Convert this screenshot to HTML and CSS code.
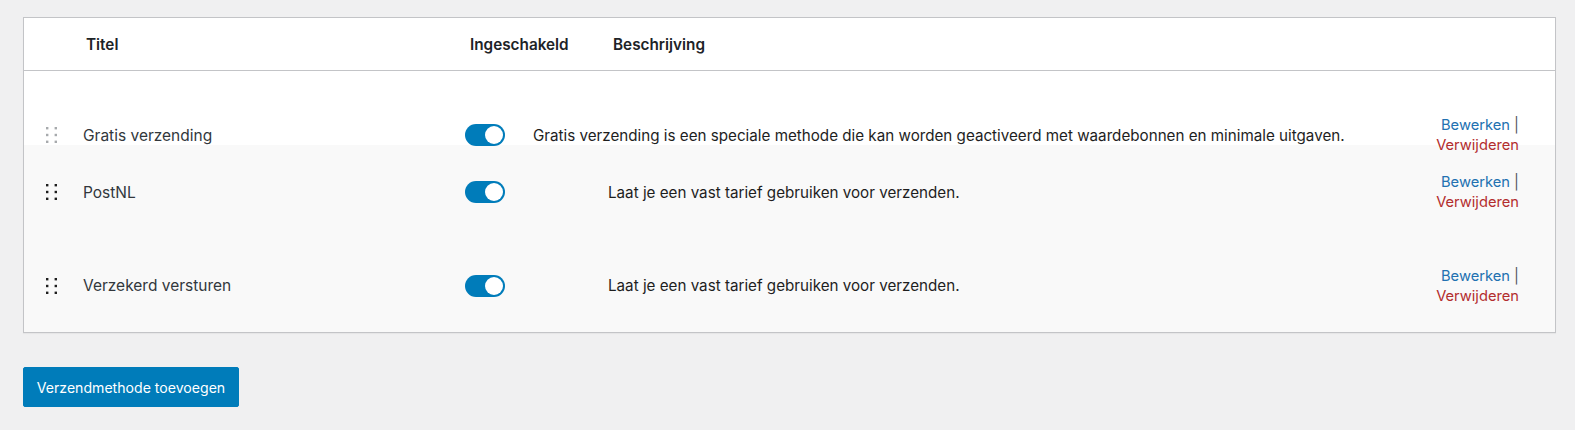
FILE: index.html
```html
<!DOCTYPE html>
<html lang="nl">
<head>
<meta charset="utf-8">
<title>Verzendmethoden</title>
<link rel="stylesheet" href="styles.css">
</head>
<body>
<div class="methods">
  <div class="head">
    <div class="h-title">Titel</div>
    <div class="h-enabled">Ingeschakeld</div>
    <div class="h-desc">Beschrijving</div>
  </div>
  <div class="row row-drag">
    <div class="c-handle"><svg class="handle handle-light" width="11" height="16" viewBox="0 0 11 16"><rect x="0" y="0" width="2.4" height="2.4"/><rect x="8.6" y="0" width="2.4" height="2.4"/><rect x="0" y="6.8" width="2.4" height="2.4"/><rect x="8.6" y="6.8" width="2.4" height="2.4"/><rect x="0" y="13.6" width="2.4" height="2.4"/><rect x="8.6" y="13.6" width="2.4" height="2.4"/></svg></div>
    <div class="c-title">Gratis verzending</div>
    <div class="c-toggle c-toggle-narrow"><span class="toggle"><span class="knob"></span></span></div>
    <div class="c-desc">Gratis verzending is een speciale methode die kan worden geactiveerd met waardebonnen en minimale uitgaven.</div>
    <div class="c-actions"><a class="edit" href="#">Bewerken</a> <span class="sep">|</span><br><a class="del" href="#">Verwijderen</a></div>
  </div>
  <div class="row row-alt row-2">
    <div class="c-handle"><svg class="handle" width="11" height="16" viewBox="0 0 11 16"><rect x="0" y="0" width="2.4" height="2.4"/><rect x="8.6" y="0" width="2.4" height="2.4"/><rect x="0" y="6.8" width="2.4" height="2.4"/><rect x="8.6" y="6.8" width="2.4" height="2.4"/><rect x="0" y="13.6" width="2.4" height="2.4"/><rect x="8.6" y="13.6" width="2.4" height="2.4"/></svg></div>
    <div class="c-title">PostNL</div>
    <div class="c-toggle"><span class="toggle"><span class="knob"></span></span></div>
    <div class="c-desc">Laat je een vast tarief gebruiken voor verzenden.</div>
    <div class="c-actions"><a class="edit" href="#">Bewerken</a> <span class="sep">|</span><br><a class="del" href="#">Verwijderen</a></div>
  </div>
  <div class="row row-alt row-3">
    <div class="c-handle"><svg class="handle" width="11" height="16" viewBox="0 0 11 16"><rect x="0" y="0" width="2.4" height="2.4"/><rect x="8.6" y="0" width="2.4" height="2.4"/><rect x="0" y="6.8" width="2.4" height="2.4"/><rect x="8.6" y="6.8" width="2.4" height="2.4"/><rect x="0" y="13.6" width="2.4" height="2.4"/><rect x="8.6" y="13.6" width="2.4" height="2.4"/></svg></div>
    <div class="c-title">Verzekerd versturen</div>
    <div class="c-toggle"><span class="toggle"><span class="knob"></span></span></div>
    <div class="c-desc">Laat je een vast tarief gebruiken voor verzenden.</div>
    <div class="c-actions"><a class="edit" href="#">Bewerken</a> <span class="sep">|</span><br><a class="del" href="#">Verwijderen</a></div>
  </div>
</div>
<button class="add-btn" type="button">Verzendmethode toevoegen</button>
</body>
</html>
```

FILE: styles.css
```css
html, body {
  margin: 0;
  padding: 0;
  background: #f0f0f1;
}
body {
  padding: 17px 19px 0 23px;
  font-family: "Inter", "Liberation Sans", sans-serif;
  color: #1d2327;
}
.methods {
  background: #fff;
  border: 1px solid #c3c4c7;
  box-shadow: 0 1px 1px rgba(0, 0, 0, 0.04);
}
.head {
  display: flex;
  align-items: center;
  height: 53px;
  border-bottom: 1px solid #c3c4c7;
  padding-left: 62px;
  font-size: 15.3px;
  font-weight: 600;
  color: #1d2327;
  box-sizing: border-box;
}
.h-title { width: 384px; }
.h-enabled { width: 143px; }
.row {
  display: flex;
  padding-left: 22px;
  padding-right: 36px;
  box-sizing: border-box;
  font-size: 15.2px;
}
.row-drag {
  height: 74px;
  align-items: center;
  padding-top: 54px;
  background: #fff;
}
.row-alt {
  background: #f9f9f9;
  align-items: center;
}
.row-2 { height: 94px; }
.row-3 { height: 93px; }
.c-handle {
  width: 37px;
  display: flex;
  align-items: center;
}
.handle { display: block; fill: #1e1e1e; }
.handle-light { fill: #a7aaad; }
.c-title {
  width: 382px;
  color: #32373c;
  font-size: 15.5px;
}
.c-toggle {
  width: 143px;
  display: flex;
  align-items: center;
}
.c-toggle-narrow { width: 68px; }
.toggle {
  display: block;
  width: 40px;
  height: 22px;
  border-radius: 11px;
  background: #007cba;
  position: relative;
  box-sizing: border-box;
}
.knob {
  position: absolute;
  top: 2px;
  right: 2px;
  width: 18px;
  height: 18px;
  border-radius: 50%;
  background: #fff;
}
.c-desc {
  flex: 1;
  color: #1e1e1e;
}
.c-actions {
  text-align: right;
  line-height: 20px;
  font-size: 14.7px;
}
.edit { color: #2271b1; text-decoration: none; }
.del { color: #b32d2e; text-decoration: none; }
.sep { color: #50575e; }
.add-btn {
  margin-top: 34px;
  display: block;
  width: 216px;
  height: 40px;
  background: #007cba;
  color: #fff;
  border: 1px solid #007cba;
  border-radius: 2px;
  font-family: "Inter", "Liberation Sans", sans-serif;
  font-size: 14.1px;
  padding: 0;
  cursor: pointer;
}
```
